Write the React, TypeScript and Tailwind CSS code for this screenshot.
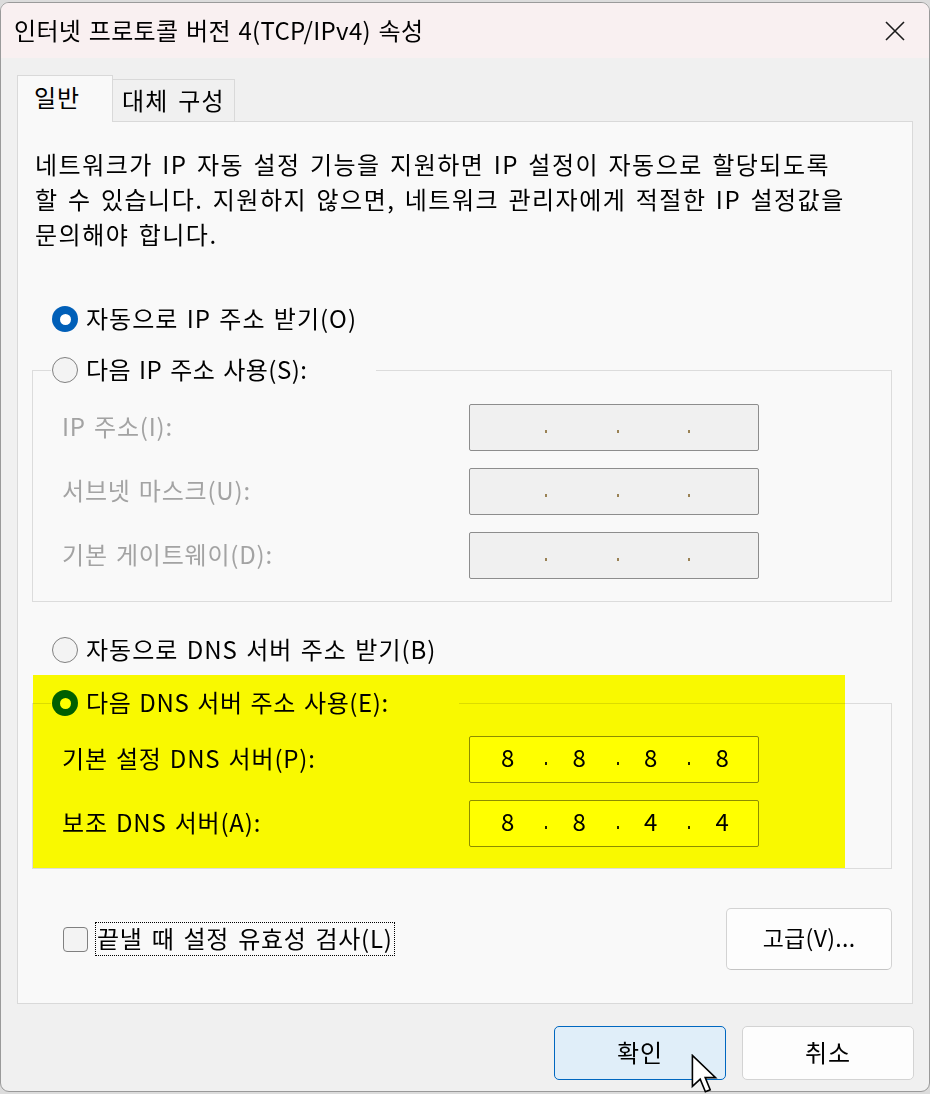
import React from "react";

function Radio({ checked }: { checked?: boolean }) {
  return checked ? (
    <span className="w-[26px] h-[26px] rounded-full bg-[#005fb8] flex items-center justify-center shrink-0">
      <span className="w-[11px] h-[11px] rounded-full bg-white" />
    </span>
  ) : (
    <span className="w-[26px] h-[26px] rounded-full border border-[#808080] bg-[#f3f3f3] shrink-0" />
  );
}

function IpField({ values, disabled }: { values: string[]; disabled?: boolean }) {
  return (
    <div
      className={
        disabled
          ? "w-[290px] h-[47px] border border-[#8d8d8d] bg-[#f0f0f0] rounded-[2px] flex pl-[2px] shrink-0"
          : "w-[290px] h-[47px] border border-[#8d8d8d] bg-white rounded-[2px] flex pl-[2px] shrink-0"
      }
    >
      {values.map((v, i) => (
        <div key={i} className="relative w-[72px] h-full flex items-center justify-center pb-[5px] text-[24px] text-black">
          {v}
          {i < 3 && (
            <span
              className={
                disabled
                  ? "absolute left-[73px] top-[25px] w-[2px] h-[3px] bg-[#9a8255]"
                  : "absolute left-[73px] top-[25px] w-[2px] h-[3px] bg-[#222]"
              }
            />
          )}
        </div>
      ))}
    </div>
  );
}

export default function App() {
  return (
    <div className="w-[930px] h-[1094px] bg-[#dcdcdc] pt-[2px] relative overflow-hidden font-['Noto_Sans_CJK_KR','Noto_Sans',sans-serif] text-black">
      <div className="w-[930px] h-[1090px] border border-[#9a9a9a] rounded-[9px] bg-[#f0f0f0] flex flex-col overflow-hidden">
        {/* Title bar */}
        <div className="h-[55px] bg-[#f9f0f1] flex items-center justify-between pl-[13px] pr-[23px] shrink-0">
          <span className="text-[24px] leading-none tracking-[0.3px] [word-spacing:2px] -mt-[2px]">인터넷 프로토콜 버전 4(TCP/IPv4) 속성</span>
          <svg width="22" height="22" viewBox="0 0 22 22" className="shrink-0">
            <path d="M2 2 L20 20 M20 2 L2 20" stroke="#1b1b1b" strokeWidth="1.6" fill="none" />
          </svg>
        </div>

        {/* Body */}
        <div className="px-[16px] pt-[16px] flex flex-col">
          {/* Tabs */}
          <div className="flex items-end h-[47px]">
            <div className="relative z-10 w-[96px] h-[47px] -mb-px border border-b-0 border-[#d9d9d9] bg-[#f9f9f9] pl-[16px] pt-[3px] text-[24px] tracking-[1px]">
              일반
            </div>
            <div className="w-[122px] h-[42px] border border-l-0 border-b-0 border-[#d9d9d9] bg-[#f0f0f0] pl-[9px] pt-[2px] text-[24px] tracking-[1.2px] [word-spacing:3px]">
              대체 구성
            </div>
          </div>

          {/* Panel */}
          <div className="relative h-[883px] border border-[#d9d9d9] bg-[#f9f9f9] flex flex-col">
            <p className="mt-[24px] pl-[17px] text-[24px] leading-[35px] tracking-[1.5px] [word-spacing:2.5px] whitespace-nowrap">
              네트워크가 IP 자동 설정 기능을 지원하면 IP 설정이 자동으로 할당되도록
              <br />할 수 있습니다. 지원하지 않으면, 네트워크 관리자에게 적절한 IP 설정값을
              <br />문의해야 합니다.
            </p>

            <div className="mt-[50px] ml-[34px] h-[36px] flex items-center gap-[8px] text-[24px] tracking-[1px] [word-spacing:2px]">
              <Radio checked />
              <span className="-mt-[3px]">자동으로 IP 주소 받기(O)</span>
            </div>

            {/* Group 1 */}
            <div className="mt-[33px] ml-[14px] w-[860px] h-[232px] border border-[#dcdcdc] flex flex-col">
              <div className="-mt-[19px] ml-[18px] w-[325px] h-[36px] bg-[#f9f9f9] flex items-center gap-[8px] pl-[1px] text-[24px] tracking-[0.5px] [word-spacing:2px]">
                <Radio />
                <span className="-mt-[3px]">다음 IP 주소 사용(S):</span>
              </div>
              {[
                "IP 주소(I):",
                "서브넷 마스크(U):",
                "기본 게이트웨이(D):",
              ].map((l, i) => (
                <div key={l} className={i === 0 ? "mt-[16px] flex items-center pl-[29px]" : "mt-[17px] flex items-center pl-[29px]"}>
                  <span className="w-[407px] -mt-[3px] text-[24px] text-[#a3a3a3] tracking-[0.8px] [word-spacing:2px]">{l}</span>
                  <IpField values={["", "", "", ""]} disabled />
                </div>
              ))}
            </div>

            <div className="mt-[30px] ml-[34px] h-[36px] flex items-center gap-[8px] text-[24px] tracking-[1px] [word-spacing:2px]">
              <Radio />
              <span className="-mt-[3px]">자동으로 DNS 서버 주소 받기(B)</span>
            </div>

            {/* Group 2 */}
            <div className="mt-[35px] ml-[14px] w-[860px] h-[166px] border border-[#dcdcdc] flex flex-col">
              <div className="-mt-[19px] ml-[18px] w-[408px] h-[36px] bg-[#f9f9f9] flex items-center gap-[8px] pl-[1px] text-[24px] tracking-[0.6px] [word-spacing:2px]">
                <Radio checked />
                <span className="-mt-[3px]">다음 DNS 서버 주소 사용(E):</span>
              </div>
              <div className="mt-[15px] flex items-center pl-[29px]">
                <span className="w-[407px] -mt-[3px] text-[24px] tracking-[0.8px] [word-spacing:2px]">기본 설정 DNS 서버(P):</span>
                <IpField values={["8", "8", "8", "8"]} />
              </div>
              <div className="mt-[17px] flex items-center pl-[29px]">
                <span className="w-[407px] -mt-[3px] text-[24px] tracking-[0.8px] [word-spacing:2px]">보조 DNS 서버(A):</span>
                <IpField values={["8", "8", "4", "4"]} />
              </div>
            </div>

            {/* Checkbox row */}
            <div className="mt-[39px] ml-[45px] w-[829px] flex items-center justify-between">
              <div className="flex items-center gap-[7px]">
                <span className="w-[25px] h-[25px] rounded-[4px] border border-[#808080] bg-[#f3f3f3]" />
                <span className="h-[34px] pl-[1px] pr-[2px] pb-[3px] border border-dotted border-black flex items-center text-[24px] tracking-[0.7px] [word-spacing:3px]">
                  끝낼 때 설정 유효성 검사(L)
                </span>
              </div>
              <button className="w-[166px] h-[62px] rounded-[5px] border border-[#d3d3d3] border-b-[#c4c4c4] bg-[#fdfdfd] pb-[3px] text-[23px] tracking-[0.3px]">
                고급(V)...
              </button>
            </div>

            {/* Yellow highlight */}
            <div className="absolute left-[15px] top-[553px] w-[812px] h-[193px] bg-[#ffff00] mix-blend-multiply pointer-events-none" />
          </div>

          {/* Bottom buttons */}
          <div className="mt-[22px] flex justify-end gap-[16px] -mr-[1px]">
            <button className="w-[172px] h-[54px] rounded-[5px] border border-[#0067c0] bg-[#e0eef9] pb-[3px] text-[24px] tracking-[1px]">확인</button>
            <button className="w-[172px] h-[54px] rounded-[5px] border border-[#d3d3d3] bg-[#fdfdfd] pb-[3px] text-[24px] tracking-[1px]">취소</button>
          </div>
        </div>
      </div>

      {/* Mouse cursor */}
      <svg className="absolute left-[691px] top-[1054px]" width="28" height="42" viewBox="0 0 14 21">
        <path
          d="M0.7 0.7 L0.7 16.2 L4.6 12.6 L7.2 18.9 L9.6 17.9 L7.1 11.8 L12.3 11.8 Z"
          fill="white"
          stroke="black"
          strokeWidth="0.8"
          strokeLinejoin="miter"
        />
      </svg>
    </div>
  );
}
